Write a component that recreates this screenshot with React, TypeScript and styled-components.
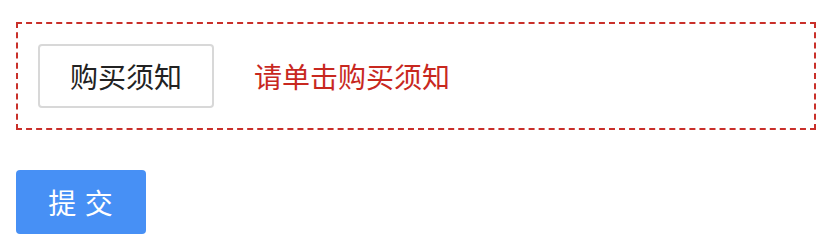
import styled, { createGlobalStyle } from 'styled-components';

const Global = createGlobalStyle`
    body {
        margin: 0;
        background: #ffffff;
        font-family: "Noto Sans CJK SC", "Noto Sans", sans-serif;
    }
`;

const Page = styled.div`
    padding: 22px 20px 0 16px;
`;

const Notice = styled.div`
    display: flex;
    align-items: center;
    gap: 40px;
    height: 64px;
    padding: 20px;
    border: 2px dashed #c9302a;
`;

const NoticeButton = styled.button`
    height: 64px;
    padding: 0 30px;
    border: 2px solid #d8d8d8;
    border-radius: 4px;
    background: #ffffff;
    color: #222222;
    font-family: inherit;
    font-size: 28px;
    line-height: 1;
`;

const Hint = styled.span`
    color: #c8281f;
    font-size: 28px;
    line-height: 1;
`;

const Submit = styled.button`
    margin-top: 40px;
    width: 130px;
    height: 64px;
    border: none;
    border-radius: 4px;
    background: #4790f5;
    color: #ffffff;
    font-family: inherit;
    font-size: 28px;
    letter-spacing: 1px;
    padding: 0;
`;

export default () => {
    return (
        <Page>
            <Global />
            <Notice>
                <NoticeButton>购买须知</NoticeButton>
                <Hint>请单击购买须知</Hint>
            </Notice>
            <Submit>提 交</Submit>
        </Page>
    );
};
